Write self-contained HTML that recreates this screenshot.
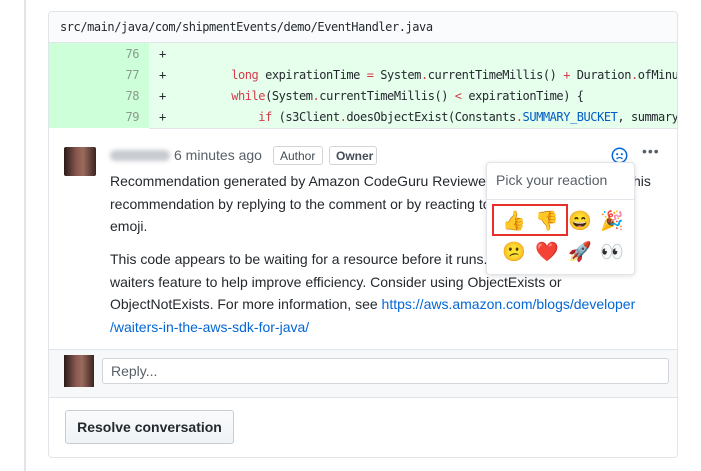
<!DOCTYPE html>
<html><head><meta charset="utf-8"><style>
body{margin:0;width:701px;height:471px;background:#fff;position:relative;overflow:hidden;font-family:"Liberation Sans",Helvetica,Arial,sans-serif;color:#24292e}
.a{position:absolute}
.mono{font-family:"DejaVu Sans Mono","Liberation Mono",monospace;font-size:12px;letter-spacing:-0.45px}
.row{position:absolute;left:0;width:630px;height:21px;line-height:21px}
.num{position:absolute;left:0;width:90px;text-align:right;color:#8a9a8f}
.plus{position:absolute;left:110px}
.code{position:absolute;left:128px;white-space:pre}
.k{color:#d73a49}.c{color:#005cc5}
.badge{position:absolute;top:146px;height:19px;line-height:19px;border:1px solid #d1d5da;border-radius:3px;font-size:12px;padding:0 6px;box-sizing:border-box}
.txt{position:absolute;left:110px;font-size:14px;line-height:22.7px;white-space:nowrap}
.em{position:absolute;font-size:19px;font-family:"Noto Color Emoji","DejaVu Sans",sans-serif;line-height:24px}
</style></head><body>
<div class="a" style="left:24px;top:0;width:2px;height:471px;background:#e1e4e8"></div>
<div class="a" style="left:48px;top:11px;width:630px;height:447px;border:1px solid #e1e4e8;border-radius:4px;overflow:hidden;box-sizing:border-box">
  <div class="a mono" style="left:0;top:0;width:100%;height:31px;background:#fafbfc;border-bottom:1px solid #e1e4e8;line-height:30px;padding-left:11px;box-sizing:border-box;color:#24292e">src/main/java/com/shipmentEvents/demo/EventHandler.java</div>
  <div class="a" style="left:0;top:31px;width:100px;height:85px;background:#cdffd8"></div>
  <div class="a" style="left:100px;top:31px;width:530px;height:85px;background:#e6ffed;border-bottom:1px solid #e1e4e8"></div>
  <div class="a mono" style="left:0;top:32px;width:630px;height:84px">
    <div class="row" style="top:0"><span class="num">76</span><span class="plus">+</span></div>
    <div class="row" style="top:21px"><span class="num">77</span><span class="plus">+</span><span class="code">        <span class="k">long</span> expirationTime <span class="k">=</span> System<span class="k">.</span>currentTimeMillis() <span class="k">+</span> Duration<span class="k">.</span>ofMinutes</span></div>
    <div class="row" style="top:42px"><span class="num">78</span><span class="plus">+</span><span class="code">        <span class="k">while</span>(System<span class="k">.</span>currentTimeMillis() <span class="k">&lt;</span> expirationTime) {</span></div>
    <div class="row" style="top:63px"><span class="num">79</span><span class="plus">+</span><span class="code">            <span class="k">if</span> (s3Client<span class="k">.</span>doesObjectExist(Constants<span class="k">.</span><span class="c">SUMMARY_BUCKET</span>, summary</span></div>
  </div>
  <div class="a" style="left:0;top:337px;width:630px;height:47px;background:#f6f8fa;border-top:1px solid #e1e4e8;border-bottom:1px solid #e1e4e8"></div>
</div>
<div class="a" style="left:64px;top:147px;width:32px;height:29px;background:linear-gradient(90deg,#2a1a18,#8a5a50 40%,#9a6a5c 60%,#3a2420);border-radius:2px"></div>
<div class="a" style="left:110px;top:150px;width:60px;height:11px;background:#c8cbd0;border-radius:5px;filter:blur(2px)"></div>
<div class="a" style="left:174px;top:146px;font-size:14px;line-height:19px;color:#586069">6 minutes ago</div>
<div class="badge" style="left:273px;width:50px;color:#444d56">Author</div>
<div class="badge" style="left:329px;width:48px;font-weight:bold;color:#444d56">Owner</div>
<svg class="a" style="left:611px;top:147px" width="17" height="17" viewBox="0 0 16 16"><circle cx="8" cy="8" r="6.8" fill="none" stroke="#0366d6" stroke-width="1.4"/><circle cx="5.8" cy="6.8" r="1" fill="#0366d6"/><circle cx="10.2" cy="6.8" r="1" fill="#0366d6"/><path d="M5.2 11.2 Q8 8.6 10.8 11.2" fill="none" stroke="#0366d6" stroke-width="1.2"/></svg>
<div class="a" style="left:642px;top:143px;font-size:14px;color:#586069;letter-spacing:1px">•••</div>
<div class="txt" style="top:170px">Recommendation generated by Amazon CodeGuru Reviewer. Provide feedback on this<br>recommendation by replying to the comment or by reacting to the comment using<br>emoji.</div>
<div class="txt" style="top:248px">This code appears to be waiting for a resource before it runs. Use the<br>waiters feature to help improve efficiency. Consider using ObjectExists or<br>ObjectNotExists. For more information, see <span style="color:#0366d6">https://aws.amazon.com/blogs/developer</span><br><span style="color:#0366d6">/waiters-in-the-aws-sdk-for-java/</span></div>
<div class="a" style="left:486px;top:162px;width:149px;height:113px;background:#fff;border:1px solid #e1e4e8;border-radius:4px;box-shadow:0 1px 5px rgba(27,31,35,.15);box-sizing:border-box">
  <div class="a" style="left:9px;top:9px;font-size:14px;color:#586069">Pick your reaction</div>
  <div class="a" style="left:0;top:36px;width:147px;height:1px;background:#e1e4e8"></div>
  <div class="a" style="left:5px;top:41px;width:76px;height:32px;border:2px solid #e8302a;box-sizing:border-box"></div>
  <span class="em" style="left:15px;top:46px">👍</span><span class="em" style="left:48px;top:46px">👎</span><span class="em" style="left:81px;top:46px">😄</span><span class="em" style="left:113px;top:46px">🎉</span>
  <span class="em" style="left:15px;top:77px">😕</span><span class="em" style="left:48px;top:77px">❤️</span><span class="em" style="left:81px;top:77px">🚀</span><span class="em" style="left:113px;top:77px">👀</span>
</div>
<div class="a" style="left:64px;top:355px;width:30px;height:32px;background:linear-gradient(90deg,#2a1a18,#8a5a50 40%,#9a6a5c 60%,#3a2420)"></div>
<div class="a" style="left:102px;top:358px;width:567px;height:26px;background:#fff;border:1px solid #d1d5da;border-radius:3px;box-sizing:border-box;font-size:14px;line-height:24px;padding-left:8px;color:#586069">Reply...</div>
<div class="a" style="left:65px;top:410px;width:169px;height:34px;background:linear-gradient(#fafbfc,#eff3f6);border:1px solid #c9cdd1;border-radius:3px;box-sizing:border-box;font-size:14px;font-weight:bold;line-height:32px;text-align:center;color:#24292e">Resolve conversation</div>
</body></html>
